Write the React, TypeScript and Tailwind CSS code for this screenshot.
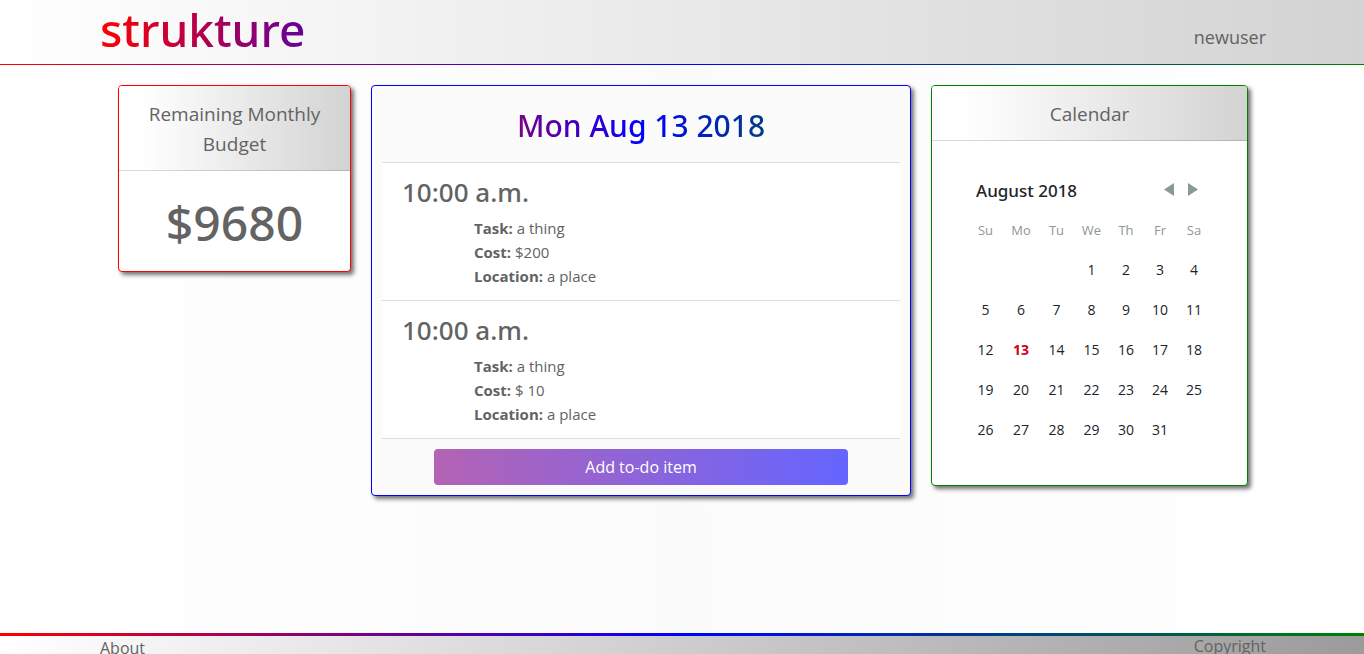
import type { ReactNode } from "react";

const WEEKDAYS = [
  { label: "Su", width: "w-[35px]" },
  { label: "Mo", width: "w-9" },
  { label: "Tu", width: "w-[35px]" },
  { label: "We", width: "w-[35px]" },
  { label: "Th", width: "w-[34px]" },
  { label: "Fr", width: "w-[34px]" },
  { label: "Sa", width: "w-[34px]" },
];

const WEEKS: (number | null)[][] = [
  [null, null, null, 1, 2, 3, 4],
  [5, 6, 7, 8, 9, 10, 11],
  [12, 13, 14, 15, 16, 17, 18],
  [19, 20, 21, 22, 23, 24, 25],
  [26, 27, 28, 29, 30, 31, null],
];

const TODAY = 13;

const ITEMS = [
  { time: "10:00 a.m.", task: "a thing", cost: "$200", location: "a place" },
  { time: "10:00 a.m.", task: "a thing", cost: "$ 10", location: "a place" },
];

function CardHeader({ children }: { children: ReactNode }) {
  return (
    <h2 className="rounded-t-[3px] border-b border-black/15 bg-linear-to-r/srgb from-white from-10% to-[#d3d3d3] px-5 pt-[13px] pb-[11px] text-center text-[19px] leading-[30px]">
      {children}
    </h2>
  );
}

function Budget() {
  return (
    <section className="rounded border border-[red] bg-white shadow-[3px_3px_4px_rgba(0,0,0,0.55)]">
      <CardHeader>Remaining Monthly Budget</CardHeader>
      <p className="px-5 pt-[22px] pb-[18px] text-center font-['Noto_Sans',sans-serif] text-[48px] leading-[60px] font-medium">
        $9680
      </p>
    </section>
  );
}

function Agenda() {
  return (
    <section className="rounded border border-[blue] bg-[#fbfbfb] px-2.5 pb-2.5 shadow-[3px_3px_4px_rgba(0,0,0,0.55)]">
      <h1 className="border-b border-[#dedede]">
        <span className="block bg-linear-to-r/srgb from-[red] via-[blue] to-[green] bg-clip-text pt-5 pb-4 text-center font-['Noto_Sans',sans-serif] text-[30px] leading-10 font-medium text-transparent">
          Mon Aug 13 2018
        </span>
      </h1>
      <ul>
        {ITEMS.map((item, index) => (
          <li key={index} className="border-b border-[#dedede] bg-white px-5 py-3">
            <h3 className="mb-1.5 font-['Noto_Sans',sans-serif] text-[26px] leading-[35px] font-medium">{item.time}</h3>
            <div className="pl-18 text-[15px] leading-6">
              <p><b>Task:</b> {item.task}</p>
              <p><b>Cost:</b> {item.cost}</p>
              <p><b>Location:</b> {item.location}</p>
            </div>
          </li>
        ))}
      </ul>
      <button
        type="button"
        className="mx-auto mt-2.5 block h-9 w-4/5 rounded bg-linear-to-r/srgb from-[#b463b4] to-[#6565ff] text-[16px] leading-6 text-white"
      >
        Add to-do item
      </button>
    </section>
  );
}

function Calendar() {
  return (
    <section className="rounded border border-[green] bg-white shadow-[3px_3px_4px_rgba(0,0,0,0.55)]">
      <CardHeader>Calendar</CardHeader>
      <div className="px-9 pt-9 pb-9 text-[#212529]">
        <div className="flex h-7 items-center justify-between pr-[13px] pl-2">
          <h3 className="font-['Noto_Sans',sans-serif] text-[17px] leading-7 font-medium">August 2018</h3>
          <div className="flex gap-3.5 pb-1 text-[#8b9898]">
            <button type="button" aria-label="Previous month">
              <svg className="block h-[13px] w-2.5" viewBox="0 0 10 13" fill="currentColor">
                <path d="M10 0v13L0 6.500z" />
              </svg>
            </button>
            <button type="button" aria-label="Next month">
              <svg className="block h-[13px] w-2.5" viewBox="0 0 10 13" fill="currentColor">
                <path d="M0 0v13L10 6.500z" />
              </svg>
            </button>
          </div>
        </div>
        <table className="mt-2 w-full table-fixed border-collapse text-center">
          <thead>
            <tr className="h-9 text-[13px] text-[#8b9898]">
              {WEEKDAYS.map(({ label, width }) => (
                <th key={label} scope="col" className={`${width} p-0 font-normal`}>{label}</th>
              ))}
            </tr>
          </thead>
          <tbody>
            {WEEKS.map((week, row) => (
              <tr key={row} className="h-10 text-[14px]">
                {week.map((day, column) => (
                  <td key={column} className={day === TODAY ? "p-0 font-bold text-[#d0021b]" : "p-0"}>
                    {day}
                  </td>
                ))}
              </tr>
            ))}
          </tbody>
        </table>
      </div>
    </section>
  );
}

export default function App() {
  return (
    <div className="flex min-h-screen flex-col bg-linear-to-r/srgb from-white via-[#fbfbfb] to-white font-['Open_Sans','Noto_Sans',sans-serif] text-[#636363]">
      <header className="bg-linear-to-r/srgb from-[red] via-[blue] to-[green] pb-px">
        <div className="flex h-16 items-start justify-between bg-linear-to-r/srgb from-white to-[#d3d3d3] pr-[98px] pl-[100px]">
          <a
            href="#home"
            className="bg-linear-to-r/srgb from-[red] to-[blue] bg-size-[340px_100%] bg-clip-text font-['Noto_Sans',sans-serif] text-[46px] leading-[58px] font-medium text-transparent"
          >
            strukture
          </a>
          <a href="#account" className="pt-[22px] text-[18px] leading-[30px]">newuser</a>
        </div>
      </header>
      <main className="grid flex-1 grid-cols-[233fr_540fr_317fr] items-start gap-5 pt-5 pr-[116px] pb-5 pl-[118px]">
        <Budget />
        <Agenda />
        <Calendar />
      </main>
      <footer className="bg-linear-to-r/srgb from-[red] via-[blue] to-[green] pt-[3px]">
        <div className="flex h-[18px] justify-between overflow-hidden bg-linear-to-r/srgb from-white to-[#9b9b9b] pr-[98px] pl-[100px] text-[16px]">
          <a href="#about" className="leading-6">About</a>
          <span className="leading-5">Copyright</span>
        </div>
      </footer>
    </div>
  );
}
